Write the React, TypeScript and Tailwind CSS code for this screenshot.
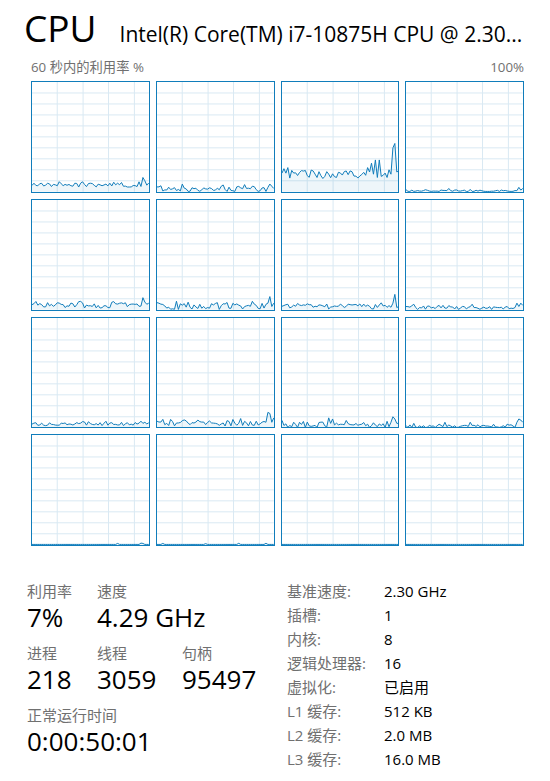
import React from "react";

const W = 117;
const H = 110;

function rng(seed: number) {
  let s = seed * 9301 + 49297;
  return () => {
    s = (s * 1103515245 + 12345) % 2147483648;
    return s / 2147483648;
  };
}

type Cfg = { seed: number; base: number; noise: number; spikes?: Record<number, number>; flat?: boolean };

function makeSeries(c: Cfg): number[] {
  const r = rng(c.seed);
  const out: number[] = [];
  for (let i = 0; i <= 60; i++) {
    let v: number;
    if (c.flat) {
      v = 0.2;
    } else {
      v = c.base + (r() - 0.5) * 2 * c.noise;
      if (r() > 0.8) v += c.noise * 0.8;
    }
    if (c.spikes && c.spikes[i] !== undefined) v = c.spikes[i];
    out.push(Math.max(0.3, v));
  }
  return out;
}

const g3: number[] = (() => {
  const r = rng(33);
  const a: number[] = [];
  for (let i = 0; i <= 60; i++) a.push(16 + (r() - 0.5) * 8);
  a[0] = 17;
  a[1] = 21;
  a[3] = 22;
  a[43] = 15;
  a[44] = 22;
  a[45] = 18;
  a[46] = 26;
  a[47] = 16;
  a[48] = 29;
  a[49] = 13;
  a[50] = 29;
  a[51] = 14;
  a[52] = 15;
  a[53] = 17;
  a[54] = 13;
  a[55] = 20;
  a[56] = 16;
  a[57] = 40;
  a[58] = 44;
  a[59] = 18;
  a[60] = 19;
  return a;
})();

const cfgs: Cfg[] = [
  { seed: 1, base: 6, noise: 1.8, spikes: { 57: 13, 58: 10, 59: 6, 60: 8 } },
  { seed: 2, base: 2.5, noise: 2.5, spikes: { 57: 4, 58: 7, 59: 5, 60: 3 } },
  { seed: 3, base: 16, noise: 4 },
  { seed: 4, base: 0.8, noise: 0.8, spikes: { 22: 3, 23: 1, 57: 1, 58: 4, 59: 1.5, 60: 3 } },
  { seed: 5, base: 4, noise: 2.5, spikes: { 57: 11, 58: 7, 59: 5, 60: 6 } },
  { seed: 6, base: 3, noise: 3, spikes: { 57: 6, 58: 12, 59: 3, 60: 6 } },
  { seed: 7, base: 3, noise: 2.5, spikes: { 57: 6, 58: 14, 59: 2, 60: 3 } },
  { seed: 8, base: 1.5, noise: 1.5, spikes: { 4: 5, 5: 2, 17: 4, 19: 4, 34: 5, 35: 2, 56: 2, 57: 6, 58: 3, 59: 6, 60: 4 } },
  { seed: 9, base: 3.5, noise: 1.6, spikes: { 57: 4, 58: 5, 59: 3.5, 60: 4.5 } },
  { seed: 10, base: 4, noise: 2.5, spikes: { 56: 5, 57: 14, 58: 13, 59: 5, 60: 9 } },
  { seed: 11, base: 2.5, noise: 2.5, spikes: { 24: 9, 25: 4, 26: 8, 56: 5, 57: 10, 58: 8, 59: 4, 60: 4 } },
  { seed: 12, base: 1.2, noise: 1.5, spikes: { 4: 4, 20: 5, 33: 5, 57: 5, 58: 8, 59: 7, 60: 5 } },
  { seed: 13, base: 0, noise: 0, flat: true, spikes: { 44: 1.2, 56: 1.5, 57: 1.2 } },
  { seed: 14, base: 0, noise: 0, flat: true, spikes: { 3: 1.2, 25: 1, 42: 1.3, 56: 1.3 } },
  { seed: 15, base: 0, noise: 0, flat: true },
  { seed: 16, base: 0, noise: 0, flat: true },
];

const series: number[][] = cfgs.map((c, i) => (i === 2 ? g3 : makeSeries(c)));

function Graph({ data }: { data: number[] }) {
  const pts = data.map((v, i) => [(i / 60) * W, H - (v / 100) * H] as [number, number]);
  const line = pts.map((p) => `${p[0].toFixed(2)},${p[1].toFixed(2)}`).join(" ");
  const area = `0,${H} ${line} ${W},${H}`;
  const vx = [25.3, 51.2, 76.7, 102.6];
  return (
    <div className="border border-[#117dbb] bg-white min-w-0 min-h-0">
      <svg
        viewBox={`0 0 ${W} ${H}`}
        preserveAspectRatio="none"
        className="block w-full h-full"
      >
        {Array.from({ length: 9 }).map((_, k) => (
          <line
            key={"h" + k}
            x1={0}
            x2={W}
            y1={(k + 1) * 11}
            y2={(k + 1) * 11}
            stroke="#d9e9f3"
            strokeWidth={1}
            vectorEffect="non-scaling-stroke"
            shapeRendering="crispEdges"
          />
        ))}
        {vx.map((x, k) => (
          <line
            key={"v" + k}
            x1={x}
            x2={x}
            y1={0}
            y2={H}
            stroke="#d9e9f3"
            strokeWidth={1}
            vectorEffect="non-scaling-stroke"
            shapeRendering="crispEdges"
          />
        ))}
        <polygon points={area} fill="#117dbb" fillOpacity={0.07} />
        <polyline
          points={line}
          fill="none"
          stroke="#117dbb"
          strokeWidth={1}
          strokeLinejoin="round"
          vectorEffect="non-scaling-stroke"
        />
      </svg>
    </div>
  );
}

function Stat({ label, value, className = "" }: { label: string; value: string; className?: string }) {
  return (
    <div className={className}>
      <div className="text-[15px] leading-[20px] text-[#707070] whitespace-nowrap">{label}</div>
      <div className="text-[26px] leading-[32px] text-black whitespace-nowrap">{value}</div>
    </div>
  );
}

const specs: [string, string][] = [
  ["基准速度:", "2.30 GHz"],
  ["插槽:", "1"],
  ["内核:", "8"],
  ["逻辑处理器:", "16"],
  ["虚拟化:", "已启用"],
  ["L1 缓存:", "512 KB"],
  ["L2 缓存:", "2.0 MB"],
  ["L3 缓存:", "16.0 MB"],
];

export default function App() {
  return (
    <div className="w-[550px] h-[781px] bg-white overflow-hidden font-['Open_Sans','Noto_Sans_CJK_SC',sans-serif]">
      <div className="flex items-baseline pl-[24px] pt-[8px] h-[48px]">
        <span className="text-[37px] leading-[40px] text-black">CPU</span>
        <span className="ml-[23px] text-[21px] leading-[28px] text-black whitespace-nowrap overflow-hidden">
          Intel(R) Core(TM) i7-10875H CPU @ 2.30...
        </span>
      </div>
      <div className="flex justify-between ml-[31px] mr-[26px] mt-[10px] h-[18px] text-[13.3px] leading-[18px] text-[#707070]">
        <span>60 秒内的利用率 %</span>
        <span>100%</span>
      </div>
      <div className="grid grid-cols-4 grid-rows-4 gap-[6px] ml-[31px] mt-[5px] w-[493px] h-[465px]">
        {series.map((d, i) => (
          <Graph key={i} data={d} />
        ))}
      </div>
      <div className="flex mt-[33px]">
        <div className="w-[287px] pl-[27px] pt-[2px] shrink-0">
          <div className="flex">
            <Stat className="w-[70px]" label="利用率" value="7%" />
            <Stat label="速度" value="4.29 GHz" />
          </div>
          <div className="flex mt-[10px]">
            <Stat className="w-[70px]" label="进程" value="218" />
            <Stat className="w-[85px]" label="线程" value="3059" />
            <Stat label="句柄" value="95497" />
          </div>
          <div className="mt-[10px]">
            <Stat label="正常运行时间" value="0:00:50:01" />
          </div>
        </div>
        <div className="grid grid-cols-[97px_auto] text-[15px] leading-[24px]">
          {specs.map(([k, v]) => (
            <React.Fragment key={k}>
              <div className="text-[#707070] whitespace-nowrap">{k}</div>
              <div className="text-black whitespace-nowrap">{v}</div>
            </React.Fragment>
          ))}
        </div>
      </div>
    </div>
  );
}
